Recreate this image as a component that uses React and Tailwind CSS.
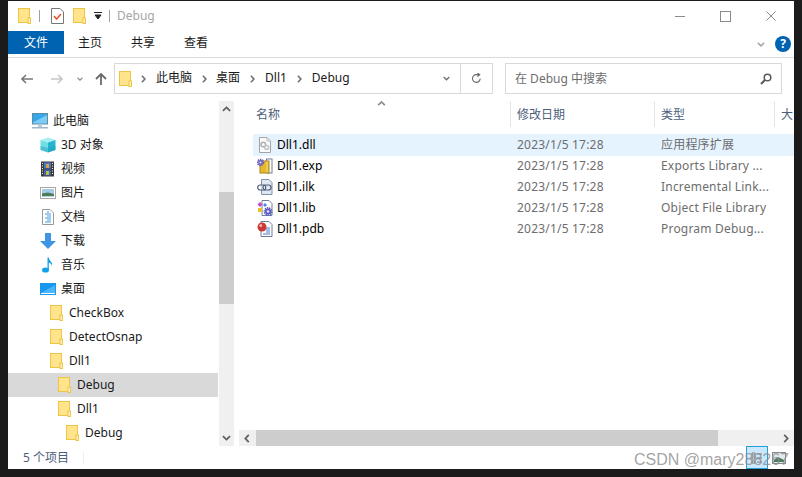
const Folder = ({ className = 'w-[13px] h-[16px]' }) => (
  <svg viewBox="0 0 13 16" className={`${className} shrink-0`}>
    <rect x="0.5" y="0.5" width="11" height="14" fill="#ffe48c" stroke="#ecc544" />
    <rect x="10" y="10" width="2.5" height="5.5" fill="#fff3c4" stroke="#ecc544" strokeWidth="1" />
  </svg>
);

const Chevron = ({ dir = 'up', className = 'w-[9px] h-[6px]', color = '#606060' }) => (
  <svg viewBox="0 0 10 6" className={className}>
    <path d={dir === 'up' ? 'M1 5 L5 1.2 L9 5' : 'M1 1 L5 4.8 L9 1'} fill="none" stroke={color} strokeWidth="2" />
  </svg>
);

const SideChevron = ({ dir = 'right', className = 'w-[6px] h-[9px]', color = '#606060' }) => (
  <svg viewBox="0 0 6 10" className={className}>
    <path d={dir === 'right' ? 'M1 1 L4.8 5 L1 9' : 'M5 1 L1.2 5 L5 9'} fill="none" stroke={color} strokeWidth="2" />
  </svg>
);

const Gear = ({ cx, cy, r, fill }) => (
  <g>
    <circle cx={cx} cy={cy} r={r} fill="none" stroke={fill} strokeWidth="1.6" strokeDasharray="1.4 0.8" />
    <circle cx={cx} cy={cy} r={r - 0.6} fill={fill} />
    <circle cx={cx} cy={cy} r={r * 0.35} fill="#ece8ff" />
  </g>
);

const Monitor = () => (
  <svg viewBox="0 0 16 16" className="w-4 h-4 shrink-0">
    <rect x="0.5" y="0.5" width="15" height="10.5" fill="#35a6e6" stroke="#5f8aa8" />
    <path d="M1 9.5 L15 2 V10.5 H1 Z" fill="#7fcdf3" />
    <rect x="6" y="11.5" width="4" height="2.5" fill="#b9cfdc" />
    <rect x="0" y="14" width="16" height="1.5" fill="#9fb6c6" />
  </svg>
);

const Cube = () => (
  <svg viewBox="0 0 16 16" className="w-4 h-4 shrink-0">
    <path d="M8 0.5 L15.5 3 L8 5.5 L0.5 3 Z" fill="#a6eef2" />
    <path d="M0.5 3 L8 5.5 V15.5 L0.5 13 Z" fill="#6fdfe6" />
    <path d="M15.5 3 L8 5.5 V15.5 L15.5 13 Z" fill="#27b4cf" />
    <path d="M0.5 9 L8 11 L15.5 9 V13 L8 15.5 L0.5 13 Z" fill="#1e9dbd" opacity="0.45" />
  </svg>
);

const Film = () => (
  <svg viewBox="0 0 16 16" className="w-4 h-4 shrink-0">
    <rect x="1" y="0.5" width="13" height="15" fill="#3c3c3c" />
    <rect x="4" y="1.5" width="7" height="6" fill="#4a74c9" />
    <rect x="4" y="8.5" width="7" height="6" fill="#3f62b5" />
    <rect x="6" y="3" width="3" height="4" fill="#d8a33c" />
    <rect x="6" y="10" width="3" height="4" fill="#b5c23a" />
    <path d="M2 2.5 h1 M2 5 h1 M2 7.5 h1 M2 10 h1 M2 12.5 h1 M12 2.5 h1 M12 5 h1 M12 7.5 h1 M12 10 h1 M12 12.5 h1" stroke="#e8e8e8" />
  </svg>
);

const Picture = () => (
  <svg viewBox="0 0 16 16" className="w-4 h-4 shrink-0">
    <rect x="0.5" y="2.5" width="15" height="11" fill="#fff" stroke="#a8a8a8" />
    <rect x="2" y="4" width="12" height="8" fill="#a8cbe4" />
    <path d="M2 8.5 L8 7.5 L14 9 V12 H2 Z" fill="#4c7a5c" />
    <rect x="2" y="11" width="12" height="1" fill="#b9d3e0" />
  </svg>
);

const DocIcon = () => (
  <svg viewBox="0 0 16 16" className="w-4 h-4 shrink-0">
    <path d="M2.5 0.5 H10 L13.5 4 V15.5 H2.5 Z" fill="#fff" stroke="#9a9a9a" />
    <path d="M7 3 h2 M5 5 h6 M7 7 h4 M5 9 h6 M7 11 h4 M5 13 h6" stroke="#3d9be0" />
  </svg>
);

const DownArrow = () => (
  <svg viewBox="0 0 16 16" className="w-4 h-4 shrink-0">
    <path d="M5 0 H11 V8 H16 L8 16 L0 8 H5 Z" fill="#3f94e4" />
  </svg>
);

const Music = () => (
  <svg viewBox="0 0 16 16" className="w-4 h-4 shrink-0">
    <ellipse cx="5.5" cy="13" rx="3.5" ry="2.6" fill="#14a0e8" />
    <path d="M7.5 13 V0.5 H8.8 C9 4 13 4.5 12 9 C11.5 6.5 10 6 8.8 5.5 V13 Z" fill="#14a0e8" />
  </svg>
);

const Desktop = () => (
  <svg viewBox="0 0 16 16" className="w-4 h-4 shrink-0">
    <rect x="0" y="2" width="16" height="12" fill="#1597f0" />
    <path d="M1 12 L15 4 V12 Z" fill="#4cb5f7" />
    <rect x="1" y="12" width="14" height="1" fill="#fff" />
  </svg>
);

const DllIcon = () => (
  <svg viewBox="0 0 16 16" className="w-4 h-4">
    <path d="M2.5 0.5 H10 L13.5 4 V15.5 H2.5 Z" fill="#fafafa" stroke="#a4a4a4" />
    <path d="M10 0.5 V4 H13.5" fill="none" stroke="#c0c0c0" />
    <circle cx="6.3" cy="7.5" r="2.3" fill="none" stroke="#b0b0b0" strokeWidth="1.5" />
    <circle cx="9.7" cy="10.5" r="2" fill="none" stroke="#c4c4c4" strokeWidth="1.5" />
  </svg>
);

const ExpIcon = () => (
  <svg viewBox="0 0 16 16" className="w-4 h-4">
    <rect x="9.5" y="1" width="5.5" height="14" fill="#fff" stroke="#6d7f9c" />
    <rect x="3" y="3" width="9" height="12" fill="#e8b82c" stroke="#a9841c" />
    <path d="M10 3.5 V14.5" stroke="#f6dc7c" />
    <Gear cx={3.5} cy={4.5} r={3} fill="#6a5cc0" />
  </svg>
);

const IlkIcon = () => (
  <svg viewBox="0 0 16 16" className="w-4 h-4">
    <path d="M4.5 0.5 H12 L15 3.5 V15.5 H4.5 Z" fill="#dfe7f3" stroke="#7f90ab" />
    <rect x="0.7" y="6" width="8" height="5" rx="2.5" fill="#fff" fillOpacity="0.6" stroke="#4f5d78" strokeWidth="1.2" />
    <rect x="6" y="6" width="8" height="5" rx="2.5" fill="none" stroke="#4f5d78" strokeWidth="1.2" />
  </svg>
);

const LibIcon = () => (
  <svg viewBox="0 0 16 16" className="w-4 h-4">
    <path d="M5 0.5 H12 L15 3.5 V15.5 H5 Z" fill="#fff" stroke="#6d7f9c" />
    <path d="M3 2 L5.5 4.5 L3 7 L0.5 4.5 Z" fill="#c44fc4" />
    <path d="M8 3 L10 5 L8 7 L6 5 Z" fill="#4a86e0" />
    <rect x="1" y="8" width="4" height="4" fill="#e8c22c" />
    <Gear cx={11} cy={11.5} r={3.6} fill="#5a58c0" />
  </svg>
);

const PdbIcon = () => (
  <svg viewBox="0 0 16 16" className="w-4 h-4">
    <path d="M4 0.5 H12 L15 3.5 V15.5 H4 Z" fill="#fff" stroke="#6d7f9c" />
    <path d="M9 7 h4 M9 9 h4 M9 11 h4 M6 13 h7" stroke="#4a78c8" />
    <circle cx="5" cy="6" r="4.5" fill="#c93a34" />
    <circle cx="3.8" cy="4.5" r="1.5" fill="#f3b0a8" />
  </svg>
);

const navItems = [
  { label: '此电脑', icon: <Monitor />, pad: 'pl-[24px]', gap: 'gap-[5px]' },
  { label: '3D 对象', icon: <Cube />, pad: 'pl-[32px]', gap: 'gap-[5px]' },
  { label: '视频', icon: <Film />, pad: 'pl-[32px]', gap: 'gap-[5px]' },
  { label: '图片', icon: <Picture />, pad: 'pl-[32px]', gap: 'gap-[5px]' },
  { label: '文档', icon: <DocIcon />, pad: 'pl-[32px]', gap: 'gap-[5px]' },
  { label: '下载', icon: <DownArrow />, pad: 'pl-[32px]', gap: 'gap-[5px]' },
  { label: '音乐', icon: <Music />, pad: 'pl-[32px]', gap: 'gap-[5px]' },
  { label: '桌面', icon: <Desktop />, pad: 'pl-[32px]', gap: 'gap-[5px]' },
  { label: 'CheckBox', icon: <Folder />, pad: 'pl-[42px]', gap: 'gap-[6px]' },
  { label: 'DetectOsnap', icon: <Folder />, pad: 'pl-[42px]', gap: 'gap-[6px]' },
  { label: 'Dll1', icon: <Folder />, pad: 'pl-[42px]', gap: 'gap-[6px]' },
  { label: 'Debug', icon: <Folder />, pad: 'pl-[50px]', gap: 'gap-[6px]', selected: true },
  { label: 'Dll1', icon: <Folder />, pad: 'pl-[50px]', gap: 'gap-[6px]' },
  { label: 'Debug', icon: <Folder />, pad: 'pl-[58px]', gap: 'gap-[6px]' },
];

const files = [
  { name: 'Dll1.dll', type: '应用程序扩展', icon: <DllIcon />, selected: true },
  { name: 'Dll1.exp', type: 'Exports Library ...', icon: <ExpIcon /> },
  { name: 'Dll1.ilk', type: 'Incremental Link...', icon: <IlkIcon /> },
  { name: 'Dll1.lib', type: 'Object File Library', icon: <LibIcon /> },
  { name: 'Dll1.pdb', type: 'Program Debug...', icon: <PdbIcon /> },
];

export default function App() {
  return (
    <div className="w-[802px] h-[477px] overflow-hidden bg-[#1b1b1b] pt-px pb-2 px-2 text-xs text-[#1a1a1a] font-['Noto_Sans','Noto_Sans_CJK_SC',sans-serif]">
      <div className="relative w-[786px] h-[468px] bg-white flex flex-col overflow-hidden">
        {/* title bar */}
        <div className="h-[30px] flex items-center shrink-0">
          <div className="pl-[10px]"><Folder className="w-[13px] h-[16px]" /></div>
          <div className="ml-[8px] w-px h-[12px] bg-[#a0a0a0]" />
          <svg viewBox="0 0 13 16" className="ml-[11px] w-[13px] h-[16px]">
            <path d="M0.5 0.5 H9 L12.5 4 V15.5 H0.5 Z" fill="#fff" stroke="#777" />
            <path d="M3 8 L5.5 11 L10 6" fill="none" stroke="#e2562a" strokeWidth="1.5" />
          </svg>
          <div className="ml-[9px]"><Folder className="w-[13px] h-[16px]" /></div>
          <svg viewBox="0 0 8 8" className="ml-[8px] w-[8px] h-[8px]">
            <path d="M0 0.5 H8 M1 3 H7 L4 7 Z" stroke="#222" fill="#222" strokeWidth="1" />
          </svg>
          <div className="ml-[7px] w-px h-[12px] bg-[#a0a0a0]" />
          <span className="ml-[7px] text-[#a6a6a6]">Debug</span>
          <div className="ml-auto flex items-center pr-[18px]">
            <div className="w-[10px] h-px bg-[#8a8a8a]" />
            <div className="ml-[35px] w-[11px] h-[11px] border border-[#8a8a8a]" />
            <svg viewBox="0 0 10 10" className="ml-[35px] w-[10px] h-[10px]">
              <path d="M0.5 0.5 L9.5 9.5 M9.5 0.5 L0.5 9.5" stroke="#8a8a8a" />
            </svg>
          </div>
        </div>

        {/* ribbon tabs */}
        <div className="h-[27px] shrink-0 border-b border-[#dadada] flex items-start">
          <div className="w-[56px] h-[23px] pt-px bg-[#0063b1] text-white flex items-center justify-center">文件</div>
          <div className="h-[23px] pt-px flex items-center ml-[14px]">主页</div>
          <div className="h-[23px] pt-px flex items-center ml-[29px]">共享</div>
          <div className="h-[23px] pt-px flex items-center ml-[29px]">查看</div>
          <div className="ml-auto h-[23px] pt-[3px] flex items-center pr-[3px]">
            <Chevron dir="down" className="w-[8px] h-[5px]" color="#a8a8a8" />
            <div className="ml-[10px] w-4 h-4 rounded-full bg-[#0063b1] text-white text-[12px] font-bold flex items-center justify-center">?</div>
          </div>
        </div>

        {/* address bar */}
        <div className="h-[43px] shrink-0 pt-[5px] flex items-start">
          <div className="h-[31px] flex items-center">
            <svg viewBox="0 0 12 10" className="ml-[13px] w-[12px] h-[10px]">
              <path d="M5 1 L1 5 L5 9 M1 5 H12" fill="none" stroke="#7a7a7a" strokeWidth="1.6" />
            </svg>
            <svg viewBox="0 0 12 10" className="ml-[18px] w-[12px] h-[10px]">
              <path d="M7 1 L11 5 L7 9 M11 5 H0" fill="none" stroke="#c8c8c8" strokeWidth="1.6" />
            </svg>
            <Chevron dir="down" className="ml-[14px] w-[6px] h-[4px]" color="#8a8a8a" />
            <svg viewBox="0 0 12 12" className="ml-[12px] w-[12px] h-[12px]">
              <path d="M1 6 L6 1 L11 6 M6 1 V12" fill="none" stroke="#6a6a6a" strokeWidth="1.8" />
            </svg>
          </div>
          <div className="ml-[7px] w-[379px] h-[31px] border border-[#d9d9d9] flex items-center">
            <div className="pl-[4px]"><Folder className="w-[13px] h-[16px]" /></div>
            <SideChevron className="ml-[9px] w-[5px] h-[8px]" color="#707070" />
            <span className="ml-[10px] -mt-px">此电脑</span>
            <SideChevron className="ml-[10px] w-[5px] h-[8px]" color="#707070" />
            <span className="ml-[9px] -mt-px">桌面</span>
            <SideChevron className="ml-[10px] w-[5px] h-[8px]" color="#707070" />
            <span className="ml-[10px] -mt-px">Dll1</span>
            <SideChevron className="ml-[10px] w-[5px] h-[8px]" color="#707070" />
            <span className="ml-[10px] -mt-px">Debug</span>
            <div className="ml-auto pr-[10px]"><Chevron dir="down" className="w-[7px] h-[5px]" color="#707070" /></div>
            <div className="w-[32px] h-full border-l border-[#d9d9d9] flex items-center justify-center">
              <svg viewBox="0 0 12 12" className="w-[11px] h-[11px]">
                <path d="M10 6 A4.2 4.2 0 1 1 6 1.8 H9 M7 0 L9.5 1.8 L7 3.8" fill="none" stroke="#6a6a6a" strokeWidth="1.2" />
              </svg>
            </div>
          </div>
          <div className="ml-[12px] w-[277px] h-[31px] border border-[#d9d9d9] flex items-center pl-[9px] pr-[9px] text-[#6d6d6d]">
            <span>在 Debug 中搜索</span>
            <svg viewBox="0 0 12 12" className="ml-auto w-[12px] h-[12px]">
              <circle cx="7.5" cy="4.5" r="3.3" fill="none" stroke="#5a5a5a" strokeWidth="1.5" />
              <path d="M5 7 L1 11" stroke="#5a5a5a" strokeWidth="2" />
            </svg>
          </div>
        </div>

        {/* main */}
        <div className="flex-1 min-h-0 flex pb-px">
          <div className="w-[211px] shrink-0 pt-[8px] overflow-hidden">
            {navItems.map((item, i) => (
              <div
                key={i}
                className={`h-6 w-[210px] flex items-center ${item.pad} ${item.gap} ${item.selected ? 'bg-[#d9d9d9]' : ''}`}
              >
                {item.icon}
                <span>{item.label}</span>
              </div>
            ))}
          </div>

          <div className="w-[15px] shrink-0 bg-[#f0f0f0] flex flex-col">
            <div className="h-4 flex items-center justify-center"><Chevron dir="up" /></div>
            <div className="h-[75px]" />
            <div className="h-[112px] bg-[#cdcdcd]" />
            <div className="flex-1" />
            <div className="h-4 flex items-center justify-center"><Chevron dir="down" /></div>
          </div>

          <div className="ml-[4px] flex-1 min-w-0 flex flex-col">
            <div className="relative h-[26px] shrink-0 flex text-[#4c607a] overflow-hidden whitespace-nowrap">
              <span className="absolute left-[139px] top-0"><Chevron dir="up" className="w-[9px] h-[5px]" color="#8a8a8a" /></span>
              <div className="w-[273px] shrink-0 pl-[18px] pt-[2px] flex items-center border-r border-[#e5e5e5]">名称</div>
              <div className="w-[144px] shrink-0 pl-[6px] pt-[2px] flex items-center border-r border-[#e5e5e5]">修改日期</div>
              <div className="w-[120px] shrink-0 pl-[6px] pt-[2px] flex items-center border-r border-[#e5e5e5]">类型</div>
              <div className="shrink-0 pl-[6px] pt-[2px] flex items-center">大</div>
            </div>
            <div className="flex-1 pt-[7px] pl-[15px]">
              {files.map((f) => (
                <div
                  key={f.name}
                  className={`flex items-center ${f.selected ? 'h-[22px] -mb-px bg-[#e5f3ff]' : 'h-[21px]'}`}
                >
                  <div className="w-[264px] pl-[4px] flex items-center gap-1 text-black">
                    {f.icon}
                    <span>{f.name}</span>
                  </div>
                  <div className="w-[144px] text-[#6d6d6d] tracking-[0.2px]">2023/1/5 17:28</div>
                  <div className="text-[#6d6d6d] whitespace-nowrap tracking-[0.2px]">{f.type}</div>
                </div>
              ))}
            </div>
            <div className="h-4 shrink-0 ml-px flex bg-[#f0f0f0]">
              <div className="w-4 flex items-center justify-center"><SideChevron dir="left" /></div>
              <div className="ml-px w-[462px] bg-[#cdcdcd]" />
              <div className="ml-auto w-4 flex items-center justify-center"><SideChevron dir="right" /></div>
            </div>
          </div>
        </div>

        {/* status bar */}
        <div className="h-[22px] shrink-0 flex items-center text-[#4c607a]">
          <span className="pl-[15px]">5 个项目</span>
          <div className="ml-[14px] w-px h-[12px] bg-[#eeeeee]" />
          <div className="ml-auto flex pr-[4px] -mt-px">
            <div className="w-[22px] h-[23px] border border-[#26a0da] bg-[#cce8ff] flex items-center justify-center">
              <svg viewBox="0 0 12 14" className="w-[12px] h-[14px]">
                <path d="M1 2 h3 v2 h-3 Z M1 6 h3 v2 h-3 Z M1 10 h3 v2 h-3 Z M6 3 h5 M6 7 h5 M6 11 h5" fill="#fff" stroke="#7a7a7a" />
              </svg>
            </div>
            <div className="w-[22px] h-[23px] flex items-center justify-center">
              <svg viewBox="0 0 14 12" className="w-[14px] h-[12px]">
                <rect x="0.5" y="0.5" width="13" height="11" fill="#dfe9ef" stroke="#8a8a8a" />
                <path d="M2 8 L6 5 L12 8 V10 H2 Z" fill="#4c7a5c" />
              </svg>
            </div>
          </div>
        </div>

        {/* watermark */}
        <span className="absolute left-[626px] top-[450px] text-[16px] leading-[18px] text-[#8c8c8c]/80 font-['Liberation_Sans',sans-serif] whitespace-nowrap">CSDN @mary288267</span>
      </div>
    </div>
  );
}
